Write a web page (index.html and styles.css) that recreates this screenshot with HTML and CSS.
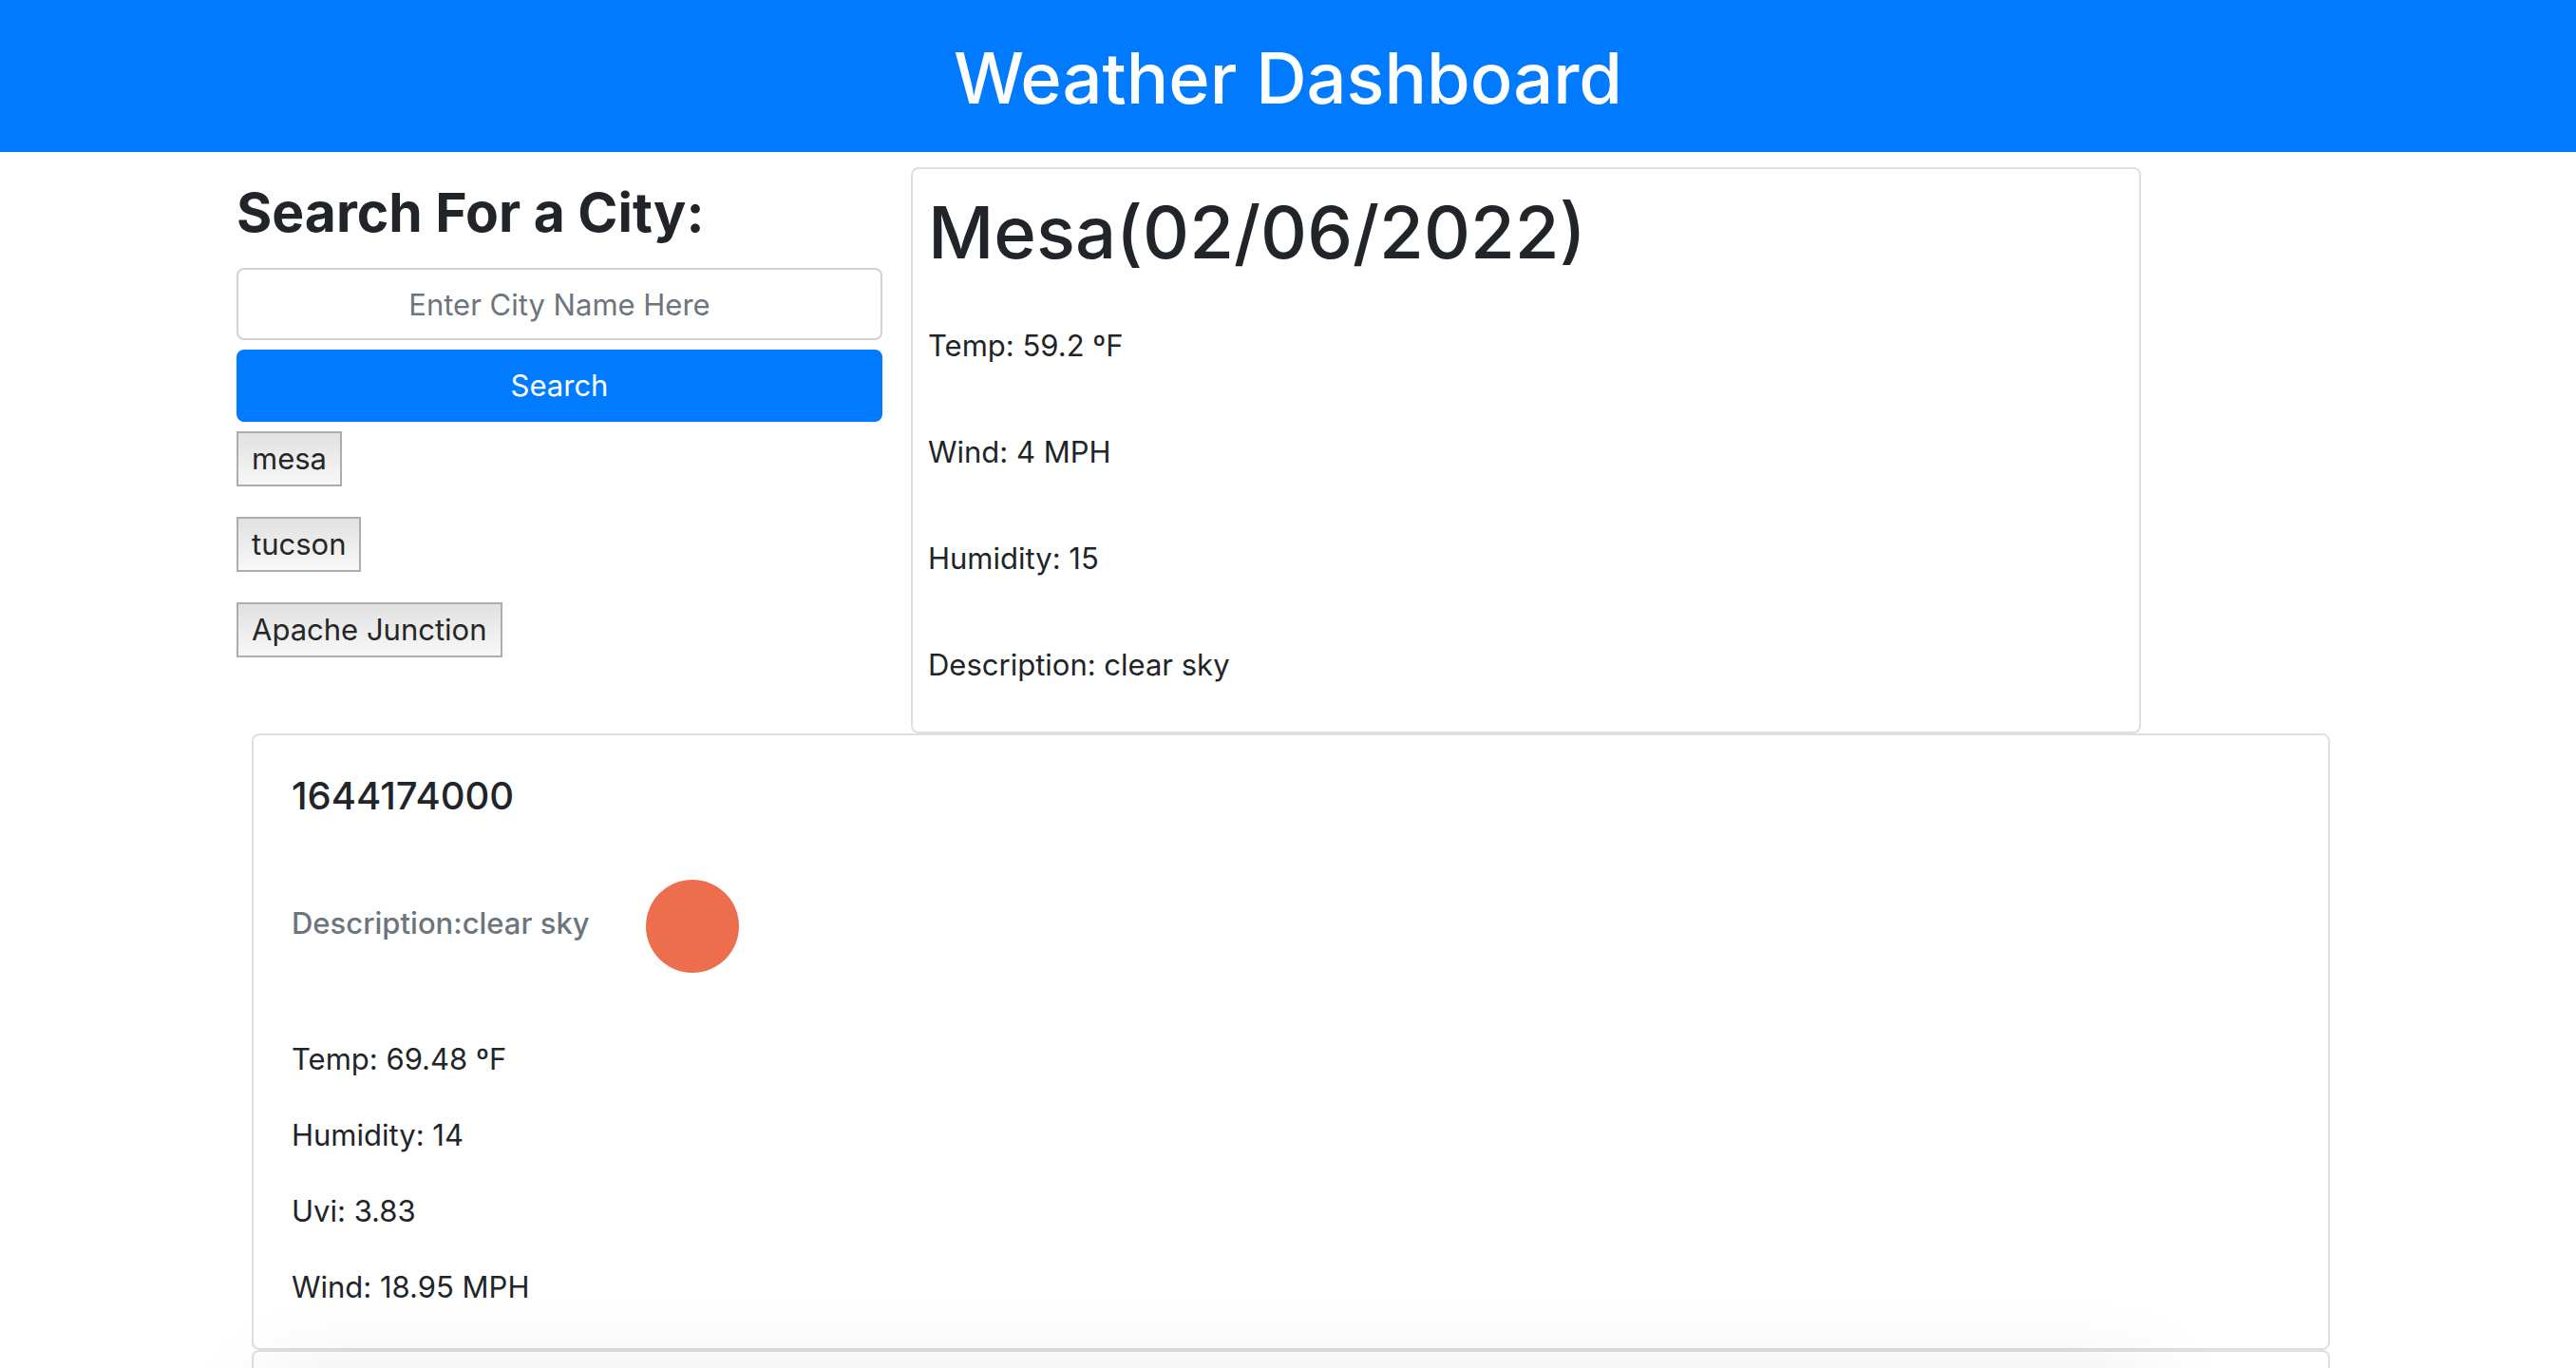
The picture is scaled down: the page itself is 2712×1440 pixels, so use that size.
FILE: index.html
```html
<!DOCTYPE html>
<html lang="en">
<head>
  <meta charset="utf-8">
  <meta name="viewport" content="width=device-width, initial-scale=1">
  <title>Weather Dashboard</title>
  <link rel="stylesheet" href="styles.css">
</head>
<body>
  <header class="banner">
    <h1 class="banner-title">Weather Dashboard</h1>
  </header>

  <main class="container">
    <div class="top-row">
      <section class="search">
        <form class="search-form">
          <label class="search-label" for="city">Search For a City:</label>
          <input class="search-input" id="city" type="text" placeholder="Enter City Name Here">
          <button class="search-button" type="submit">Search</button>
        </form>
        <div class="history">
          <button class="history-button" type="button">mesa</button>
          <button class="history-button" type="button">tucson</button>
          <button class="history-button" type="button">Apache Junction</button>
        </div>
      </section>

      <section class="card current">
        <h2 class="current-title">Mesa(02/06/2022)</h2>
        <div class="current-details">
          <p>Temp: 59.2 ºF</p>
          <p>Wind: 4 MPH</p>
          <p>Humidity: 15</p>
          <p>Description: clear sky</p>
        </div>
      </section>
    </div>

    <section class="forecast">
      <article class="card day">
        <h3 class="day-title">1644174000</h3>
        <h4 class="day-description">Description:clear sky <svg class="day-icon" viewBox="0 0 200 200" role="img" aria-label="Clear sky"><circle cx="100" cy="100" r="49" fill="#ec6e4c"/></svg></h4>
        <div class="day-details">
          <p>Temp: 69.48 ºF</p>
          <p>Humidity: 14</p>
          <p>Uvi: 3.83</p>
          <p>Wind: 18.95 MPH</p>
        </div>
      </article>
      <article class="card day"></article>
    </section>
  </main>
</body>
</html>
```

FILE: styles.css
```css
* {
  box-sizing: border-box;
}

html {
  height: 100%;
  overflow: hidden;
}

body {
  height: 100%;
  margin: 0;
  overflow: hidden;
  background: #fff;
  color: #212529;
  font-family: Inter, "Liberation Sans", sans-serif;
  font-size: 31px;
  line-height: 48px;
}

/* soft shade along the lower edge of the window */
body::after {
  content: "";
  position: fixed;
  top: calc(100% + 32px);
  left: 11%;
  right: 17%;
  height: 100px;
  box-shadow: 0 0 100px 16px rgba(0, 0, 0, 0.1);
  pointer-events: none;
}

h1,
h2,
h3,
h4,
p {
  margin: 0;
  font-weight: 500;
}

p {
  font-weight: 400;
}

button,
input {
  font: inherit;
}

.banner {
  padding: 34px 32px 30px;
  background: #007bff;
  color: #fff;
  text-align: center;
}

.banner-title {
  font-size: 74px;
  line-height: 96px;
}

.current-title {
  font-size: 76px;
  line-height: 96px;
}

.container {
  max-width: 2280px;
  margin: 0 auto;
  padding: 16px 33px 0;
}

.top-row {
  display: grid;
  grid-template-columns: 680fr 1295fr 179fr;
  column-gap: 30px;
}

.search-form {
  display: flex;
  flex-direction: column;
  gap: 10px;
}

.search-label {
  padding-top: 10px;
  font-size: 57px;
  font-weight: 700;
  line-height: 76px;
  margin-bottom: 10px;
}

.search-input {
  width: 100%;
  height: 76px;
  padding: 12px 24px;
  border: 2px solid #ced4da;
  border-radius: 8px;
  background: #fff;
  color: #495057;
  text-align: center;
}

.search-input::placeholder {
  color: #6c757d;
  opacity: 1;
}

.search-button {
  height: 76px;
  padding: 12px 24px;
  border: 2px solid #007bff;
  border-radius: 8px;
  background: #007bff;
  color: #fff;
}

.history {
  display: flex;
  flex-direction: column;
  align-items: flex-start;
  gap: 32px;
  padding-top: 10px;
}

.history-button {
  height: 58px;
  padding: 0 14px;
  border: 2px solid #adadad;
  background: linear-gradient(#e1e1e1, #f8f8f8);
  color: #262626;
}

.card {
  border: 2px solid #dfdfdf;
  border-radius: 8px;
  background: #fff;
}

.current {
  padding: 18px 16px 14px;
}

.current-details {
  display: flex;
  flex-direction: column;
  gap: 64px;
  padding: 48px 0 32px;
}

.forecast {
  padding: 0 10px 0 16px;
}

.day {
  min-height: 120px;
  padding: 40px;
}

.day-title {
  margin-bottom: 13px;
  font-size: 40px;
}

.day-description {
  margin-bottom: 16px;
  color: #6c757d;
}

.day-icon {
  width: 200px;
  height: 200px;
  vertical-align: middle;
}

.day-details {
  display: flex;
  flex-direction: column;
  gap: 32px;
}
```
